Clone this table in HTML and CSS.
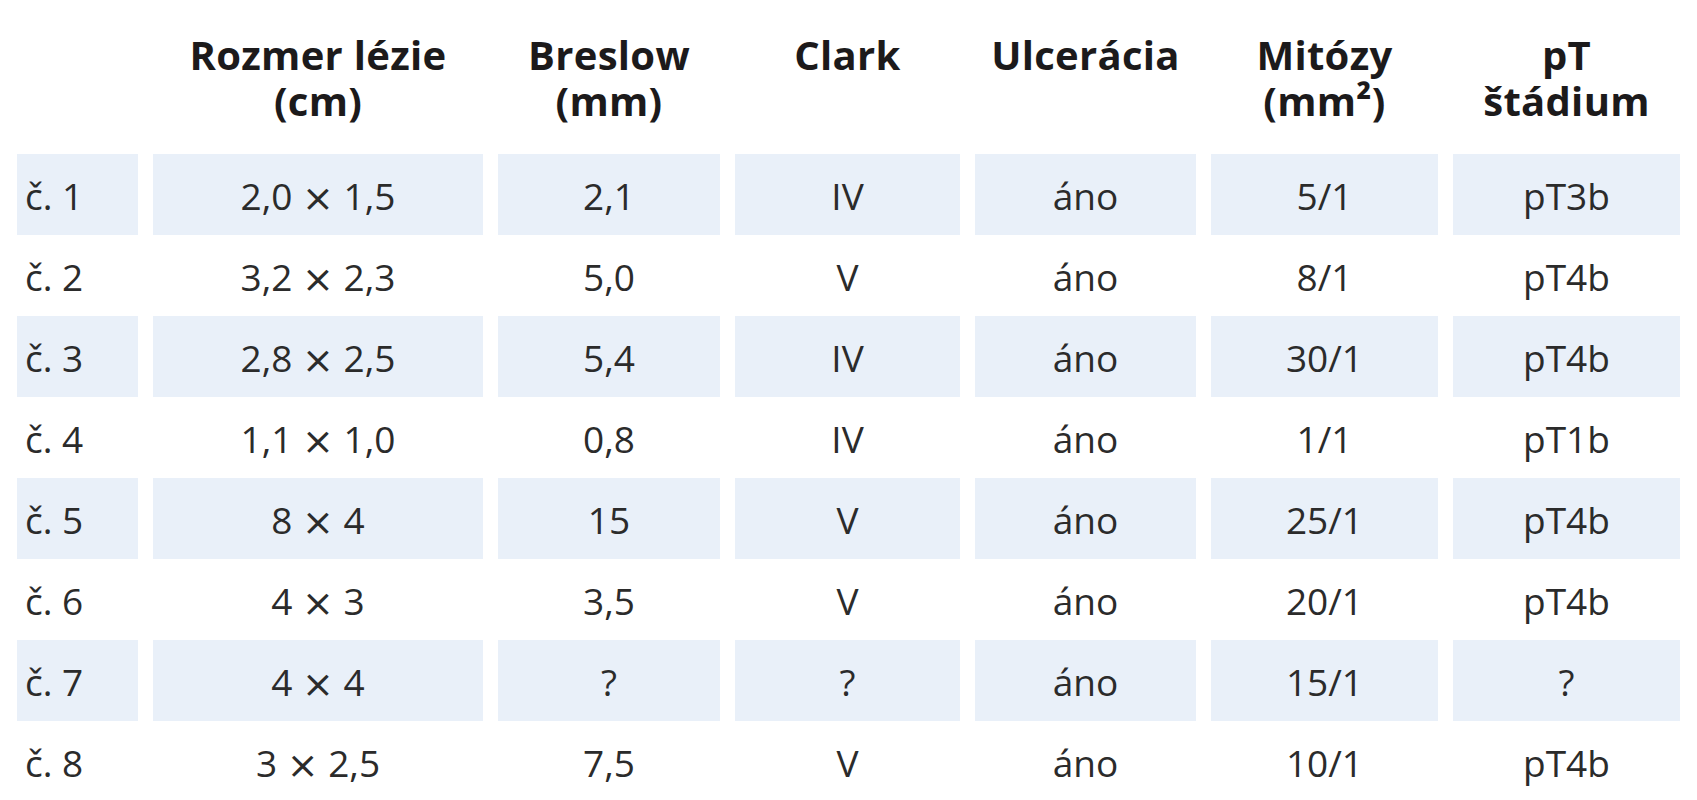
FILE: index.html
```html
<!DOCTYPE html>
<html lang="sk">
<head>
<meta charset="utf-8">
<title>Tabuľka</title>
<link rel="stylesheet" href="styles.css">
</head>
<body>
<table class="data">
  <colgroup>
    <col class="c0"><col class="c1"><col class="c2"><col class="c3"><col class="c4"><col class="c5"><col class="c6">
  </colgroup>
  <thead>
    <tr>
      <th></th>
      <th>Rozmer lézie<br>(cm)</th>
      <th>Breslow<br>(mm)</th>
      <th>Clark</th>
      <th>Ulcerácia</th>
      <th>Mitózy<br>(mm²)</th>
      <th>pT<br>štádium</th>
    </tr>
  </thead>
  <tbody>
    <tr class="shade"><td class="lbl">č. 1</td><td>2,0 <span class="x">×</span> 1,5</td><td>2,1</td><td>IV</td><td>áno</td><td>5/1</td><td>pT3b</td></tr>
    <tr><td class="lbl">č. 2</td><td>3,2 <span class="x">×</span> 2,3</td><td>5,0</td><td>V</td><td>áno</td><td>8/1</td><td>pT4b</td></tr>
    <tr class="shade"><td class="lbl">č. 3</td><td>2,8 <span class="x">×</span> 2,5</td><td>5,4</td><td>IV</td><td>áno</td><td>30/1</td><td>pT4b</td></tr>
    <tr><td class="lbl">č. 4</td><td>1,1 <span class="x">×</span> 1,0</td><td>0,8</td><td>IV</td><td>áno</td><td>1/1</td><td>pT1b</td></tr>
    <tr class="shade"><td class="lbl">č. 5</td><td>8 <span class="x">×</span> 4</td><td>15</td><td>V</td><td>áno</td><td>25/1</td><td>pT4b</td></tr>
    <tr><td class="lbl">č. 6</td><td>4 <span class="x">×</span> 3</td><td>3,5</td><td>V</td><td>áno</td><td>20/1</td><td>pT4b</td></tr>
    <tr class="shade"><td class="lbl">č. 7</td><td>4 <span class="x">×</span> 4</td><td>?</td><td>?</td><td>áno</td><td>15/1</td><td>?</td></tr>
    <tr><td class="lbl">č. 8</td><td>3 <span class="x">×</span> 2,5</td><td>7,5</td><td>V</td><td>áno</td><td>10/1</td><td>pT4b</td></tr>
  </tbody>
</table>
</body>
</html>
```

FILE: styles.css
```css
html, body {
  margin: 0;
  padding: 0;
  background: #ffffff;
}

body {
  font-family: "Open Sans", "Noto Sans", "Liberation Sans", sans-serif;
  color: #2b2b2b;
}

.data {
  margin-left: 2px;
  border-collapse: separate;
  border-spacing: 15px 0;
  table-layout: fixed;
}

.c0 { width: 121px; }
.c1 { width: 330px; }
.c2 { width: 222px; }
.c3 { width: 225px; }
.c4 { width: 221px; }
.c5 { width: 227px; }
.c6 { width: 227px; }

.data th {
  height: 154px;
  padding: 32px 0 0 0;
  box-sizing: border-box;
  vertical-align: top;
  font-weight: 700;
  font-size: 40px;
  line-height: 46px;
  letter-spacing: 0.3px;
  color: #1c1a1b;
  text-align: center;
}

.data td {
  height: 81px;
  padding: 6px 0 0 0;
  box-sizing: border-box;
  font-size: 37px;
  line-height: 72px;
  text-align: center;
  vertical-align: top;
}

.data td.lbl {
  text-align: left;
  padding-left: 8px;
}

.x {
  font-family: "DejaVu Sans", sans-serif;
  font-size: 38px;
  line-height: 0;
  vertical-align: -1px;
}

.shade td {
  background: #e9f0f9;
}
```
